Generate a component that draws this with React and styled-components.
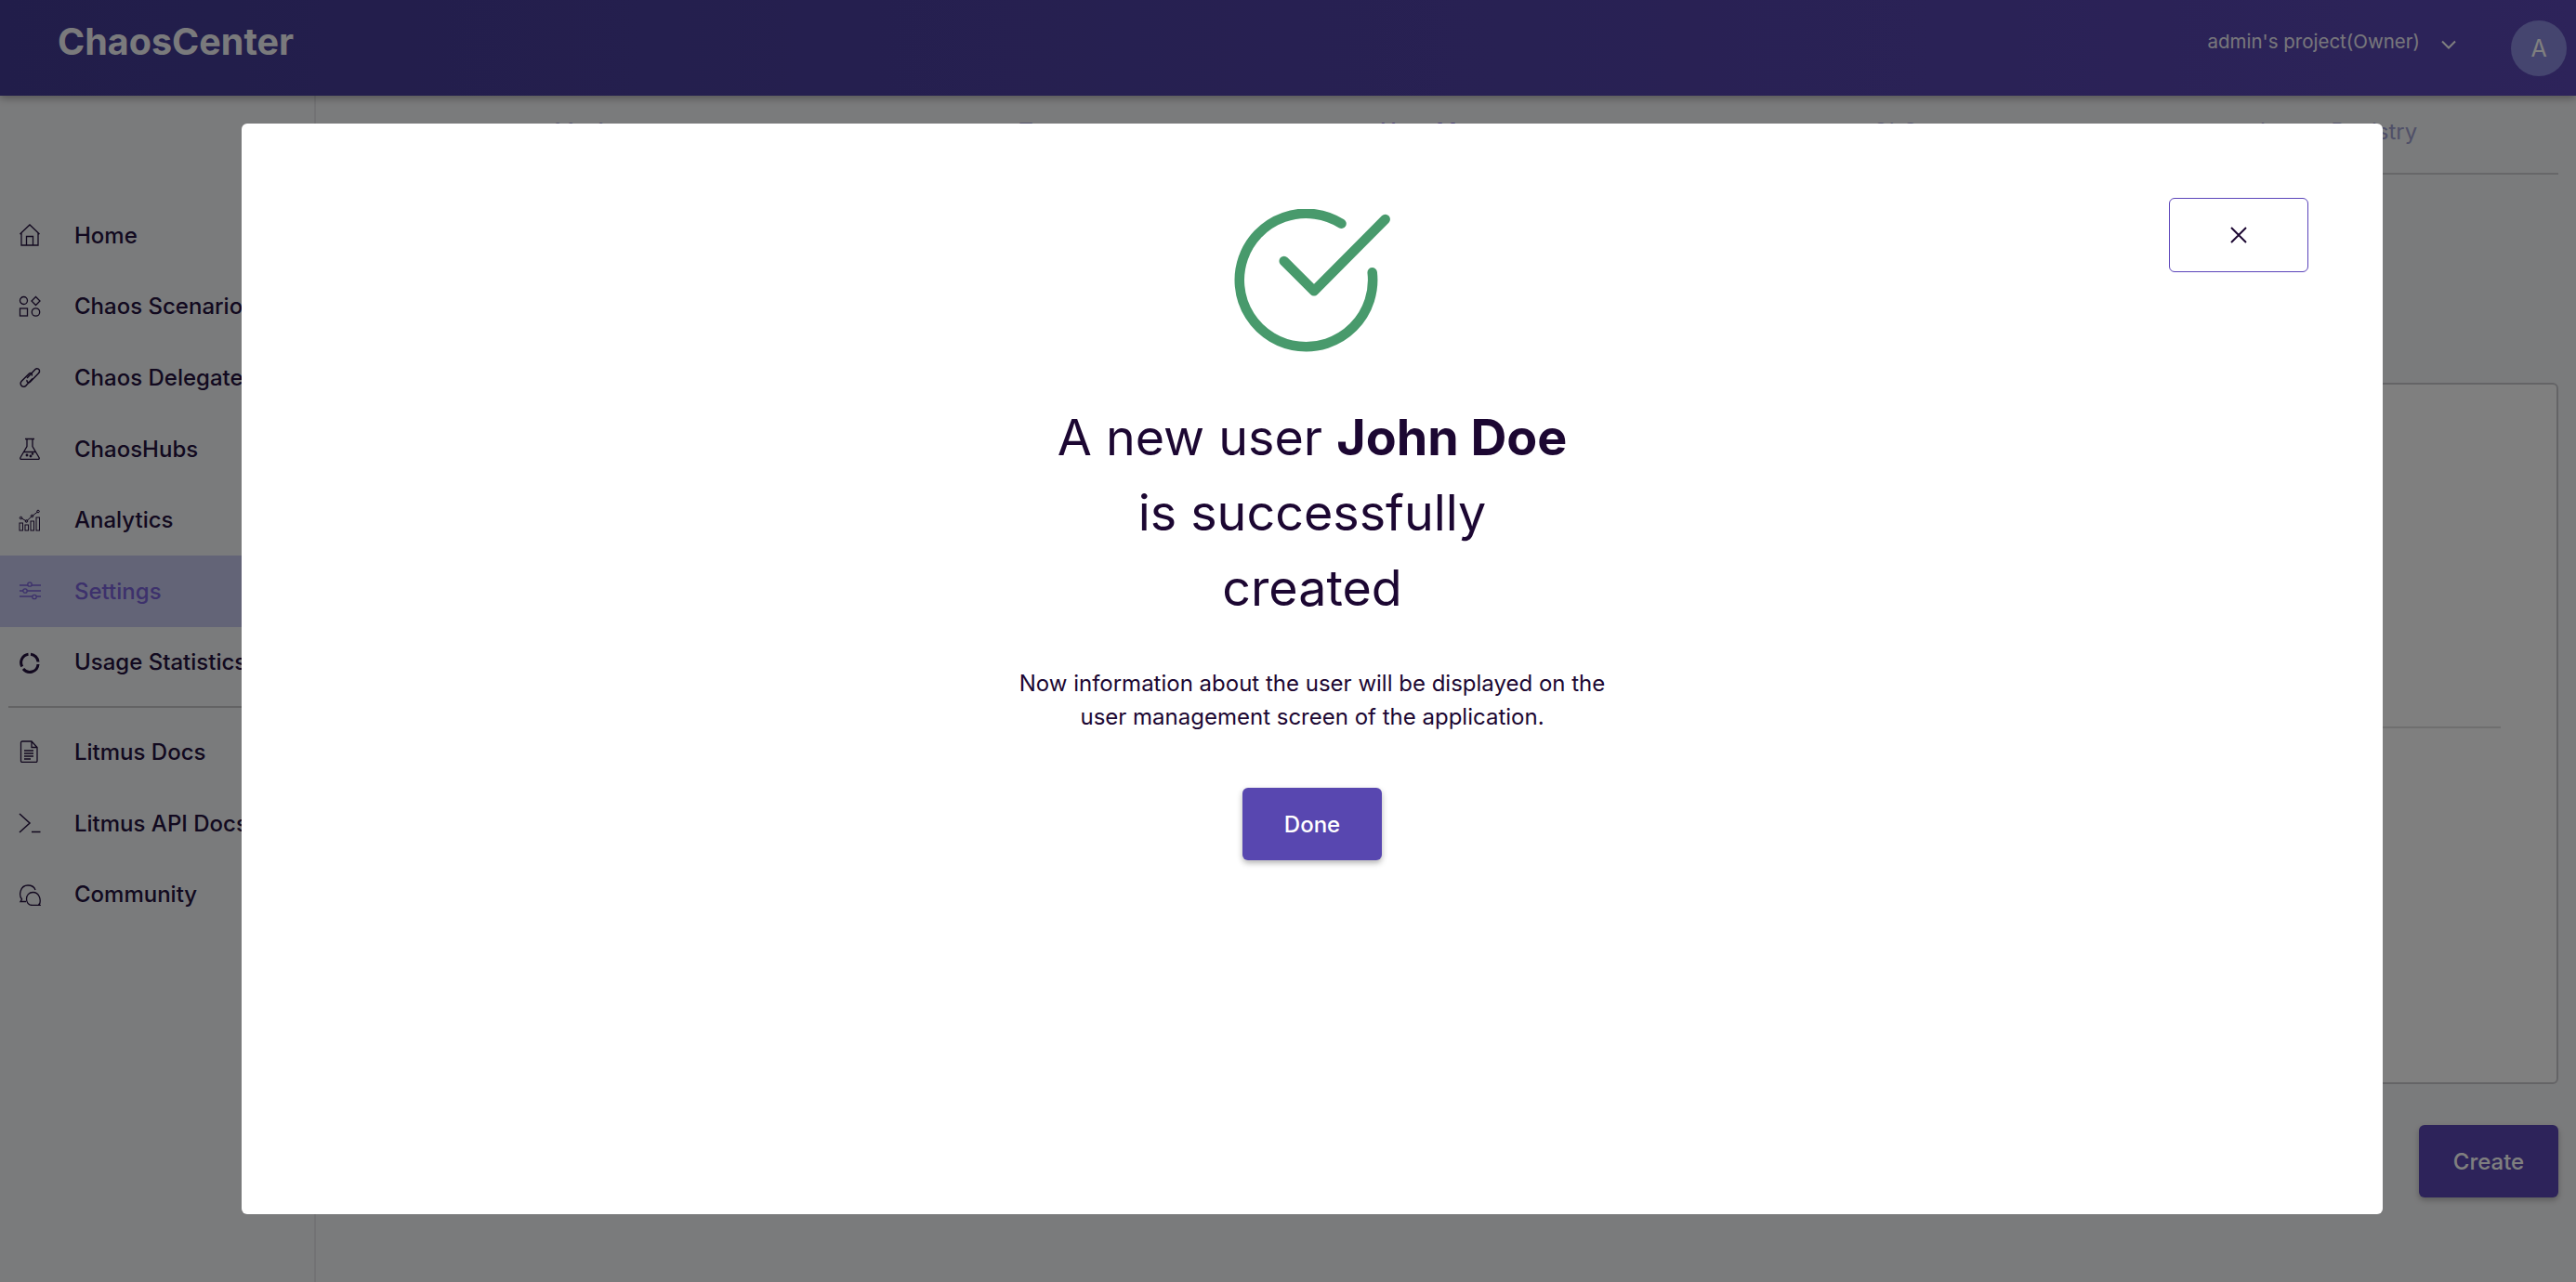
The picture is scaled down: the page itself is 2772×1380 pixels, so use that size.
import React from 'react';
import styled, { createGlobalStyle } from 'styled-components';

const Global = createGlobalStyle`
  html, body { margin: 0; padding: 0; height: 100%; }
  body { background: #f5f6f8; font-family: Inter, "Liberation Sans", sans-serif; color: #24123f; overflow: hidden; }
  #root { height: 100%; }
`;

const Page = styled.div`
  width: 2772px; height: 1380px; display: flex; flex-direction: column; background: #f5f6f8;
`;
const Header = styled.header`
  height: 103px; flex: none; display: flex; align-items: center;
  padding: 0 10px 14px 62px; box-sizing: border-box;
  background: linear-gradient(90deg, #433b94 0%, #5a47b4 100%);
  box-shadow: 0 3px 8px rgba(0,0,0,.3); position: relative; z-index: 1;
`;
const Logo = styled.div`
  font-size: 39.5px; font-weight: 700; color: #fff; flex: 1; opacity: .95;
`;
const Project = styled.div`
  font-size: 20.5px; color: #fff; opacity: .9; margin-right: 23px; margin-top: -1px;
`;
const ChevronWrap = styled.div`
  display: flex; margin-right: 59px; margin-top: 6px; color: #fff;
`;
const Avatar = styled.div`
  width: 60px; height: 60px; border-radius: 50%; background: #8a8ade; color: #fff;
  display: flex; align-items: center; justify-content: center; font-size: 25px; margin-top: 14px;
`;
const Body = styled.div`
  flex: 1; display: flex; min-height: 0;
`;
const Sidebar = styled.nav`
  width: 340px; flex: none; box-sizing: border-box; border-right: 2px solid #e4e4e8;
  padding-top: 112px; display: flex; flex-direction: column;
`;
const NavRow = styled.div`
  height: 76.6px; flex: none; display: flex; align-items: center; padding-left: 20px; box-sizing: border-box;
  font-size: 24px; font-weight: 500; white-space: nowrap; overflow: hidden;
  color: ${p => (p.$active ? '#7a62d8' : '#24123f')};
  background: ${p => (p.$active ? '#c6c9ee' : 'transparent')};
  svg { flex: none; margin-right: 36px; }
`;
const NavDivider = styled.div`
  height: 2px; background: #c6c6c8; margin: 9px 0 9px 9px; flex: none;
`;
const Main = styled.main`
  flex: 1; min-width: 0; display: flex; flex-direction: column; padding: 0 19px 0 0; position: relative;
`;
const Tabs = styled.div`
  height: 83px; flex: none; display: grid; grid-template-columns: repeat(5, 1fr); box-sizing: content-box;
  border-bottom: 2px solid #cfcfd2; margin-left: 10px; padding: 0 5px 0 83px;
`;
const Tab = styled.div`
  display: flex; align-items: center; justify-content: center; font-size: 24px; padding-bottom: 7px;
  color: ${p => (p.$active ? '#8470e0' : '#a0a0d0')};
  font-weight: ${p => (p.$active ? 500 : 400)};
`;
const Panel = styled.section`
  margin-top: 224px; height: 755px; flex: none; box-sizing: border-box; border: 2px solid #c9c9cd; border-radius: 6px;
  background: #fff; padding-top: 368px; padding-right: 60px;
`;
const PanelLine = styled.div`
  height: 2px; background: #dedede;
`;
const Actions = styled.div`
  display: flex; justify-content: flex-end; margin-top: 44px;
`;
const CreateBtn = styled.button`
  width: 150px; height: 78px; border: 0; border-radius: 6px; background: #5a47b4; color: #fff; font: 500 24px Inter, sans-serif;
  box-shadow: 0 3px 6px rgba(0,0,0,.25);
`;
const Overlay = styled.div`
  position: fixed; inset: 0; z-index: 5; background: rgba(0,0,0,.5);
  padding: 133px 208px 73px 260px; box-sizing: border-box; display: flex;
`;
const Modal = styled.div`
  flex: 1; background: #fff; border-radius: 6px; display: flex; flex-direction: column; align-items: center;
  position: relative; padding-top: 92px; box-sizing: border-box; color: #1c0732;
`;
const CloseBtn = styled.button`
  position: absolute; top: 80px; right: 80px; width: 150px; height: 80px; box-sizing: border-box;
  background: #fff; border: 1.5px solid #5B44BA; border-radius: 6px; display: flex; align-items: center; justify-content: center;
  color: #1c0732; padding: 0;
`;
const Title = styled.h1`
  margin: 45px 0 0; width: 556px; text-align: center; font-size: 53.8px; line-height: 81px; font-weight: 400;
  strong { font-weight: 700; }
`;
const Message = styled.p`
  margin: 45px 0 0; width: 660px; text-align: center; font-size: 24px; line-height: 36px; font-weight: 400;
`;
const DoneBtn = styled.button`
  margin-top: 58px; width: 150px; height: 78px; border: 0; border-radius: 6px; background: #5847B0; color: #fff;
  font: 500 24px Inter, sans-serif; box-shadow: 0 3px 6px rgba(0,0,0,.3);
`;

const ic = { width: 24, height: 24, fill: 'none', stroke: 'currentColor', strokeWidth: 1.3, viewBox: '0 0 24 24' };
const icons = {
  home: <svg {...ic}><path d="M1.500 11 12 1l10.500 10M3 9.500V23h18V9.500M8.500 23v-9.500h7V23" /></svg>,
  shapes: <svg {...ic}><circle cx="5.500" cy="5.500" r="4" /><path d="M18.500 1.500 23 6l-4.500 4.500L14 6z" /><rect x="1.500" y="14" width="8" height="8" /><circle cx="18.500" cy="18" r="4.200" /></svg>,
  link: <svg {...ic} strokeWidth="1.500"><path d="M9 13 18 3.500c2-1.800 5-.2 4.500 2.500-.2.800-.6 1.400-1.200 2L12.500 17c-1.500 1.500-4 .5-3.500-2" /><path d="M14 10.500c1.200-1.800-.6-3.800-2.500-2.500L3 16.500c-1.800 2-.6 5.500 2.200 5.800 1.200.1 2-.4 2.800-1.200l7-7.500" /></svg>,
  flask: <svg {...ic}><path d="M7 1.500h10M9 1.500v8L2 21.500c-.5 1 0 2 1 2h18c1 0 1.500-1 1-2L15 9.500v-8M5.500 15.500h13" /><circle cx="9" cy="19" r=".8" /><circle cx="13" cy="20" r=".8" /><circle cx="15" cy="17.500" r=".6" /></svg>,
  chart: <svg {...ic} strokeWidth="1"><rect x="1" y="15" width="3.500" height="8" /><rect x="7" y="17" width="3.500" height="6" /><rect x="13" y="13" width="3.500" height="10" /><rect x="19" y="9" width="3.500" height="14" /><path d="M2.500 9.500 8.500 13 14.500 7.500 20.500 3" /><circle cx="2.500" cy="9.500" r="1.300" /><circle cx="8.500" cy="13" r="1.300" /><circle cx="14.500" cy="7.500" r="1.300" /><circle cx="21" cy="2.500" r="1.300" /></svg>,
  sliders: <svg {...ic}><path d="M1 6h23M1 12h23M1 18h23" /><circle cx="12" cy="5" r="2.200" fill="#c6c9ee" /><circle cx="7" cy="12" r="2.200" fill="#c6c9ee" /><circle cx="17" cy="18.500" r="2.200" fill="#c6c9ee" /></svg>,
  ring: <svg {...ic} strokeWidth="3"><path d="M13 3.200a9 9 0 0 1 8 8.300M21 14a9 9 0 0 1-16 5M3.800 16.500A9 9 0 0 1 10.500 3.200" /></svg>,
  doc: <svg {...ic}><path d="M2.500 2.500c0-.8.500-1.500 1.500-1.500h10l6 6.500V22c0 1-.5 1.500-1.500 1.500H4c-1 0-1.500-.5-1.500-1.500zM14 1v6.500h6M6 11h10M6 14h10M6 17h10M6 20h7" /></svg>,
  term: <svg {...ic} strokeWidth="1.500"><path d="M1 2l11 10L1 22M14 21.500h9.500" /></svg>,
  chat: <svg {...ic}><path d="M8 19.500H2l1.500-2.500C0 13 1.500 2 10 2c4 0 7 2 8 5" /><path d="M22.500 22.500c2-5.500-.5-13-7-13-9 0-9.500 14-.5 14h8l-1.500-1.500z" /></svg>,
};

const nav = [
  ['home', 'Home'], ['shapes', 'Chaos Scenarios'], ['link', 'Chaos Delegates'], ['flask', 'ChaosHubs'],
  ['chart', 'Analytics'], ['sliders', 'Settings', true], ['ring', 'Usage Statistics'],
];
const nav2 = [['doc', 'Litmus Docs'], ['term', 'Litmus API Docs'], ['chat', 'Community']];

export default function App() {
  return (
    <Page>
      <Global />
      <Header>
        <Logo>ChaosCenter</Logo>
        <Project>admin's project(Owner)</Project>
        <ChevronWrap>
          <svg width="16" height="10" viewBox="0 0 16 10" fill="none" stroke="currentColor" strokeWidth="2"><path d="M1 1.500 8 8.500 15 1.500" /></svg>
        </ChevronWrap>
        <Avatar>A</Avatar>
      </Header>
      <Body>
        <Sidebar>
          {nav.map(([i, t, a]) => <NavRow key={t} $active={a}>{icons[i]}{t}</NavRow>)}
          <NavDivider />
          {nav2.map(([i, t]) => <NavRow key={t}>{icons[i]}{t}</NavRow>)}
        </Sidebar>
        <Main>
          <Tabs>
            {['My Account', 'Team', 'User Management', 'GitOps', 'Image Registry'].map(t => <Tab key={t} $active={t === 'User Management'}>{t}</Tab>)}
          </Tabs>
          <Panel><PanelLine /></Panel>
          <Actions><CreateBtn>Create</CreateBtn></Actions>
        </Main>
      </Body>
      <Overlay>
        <Modal>
          <svg width="184" height="160" viewBox="0 0 184 160" fill="none" stroke="#489A6C" strokeWidth="10.500" strokeLinecap="round" strokeLinejoin="round">
            <path d="M123.500 15.700A71.700 71.700 0 1 0 156.700 68.300" />
            <path d="M61.700 56 94 88.300 170.700 11" />
          </svg>
          <CloseBtn aria-label="Close">
            <svg width="18" height="18" viewBox="0 0 18 18" fill="none" stroke="currentColor" strokeWidth="2"><path d="M1 1l16 16M17 1 1 17" /></svg>
          </CloseBtn>
          <Title>A new user <strong>John Doe</strong> is successfully created</Title>
          <Message>Now information about the user will be displayed on the user management screen of the application.</Message>
          <DoneBtn>Done</DoneBtn>
        </Modal>
      </Overlay>
    </Page>
  );
}
